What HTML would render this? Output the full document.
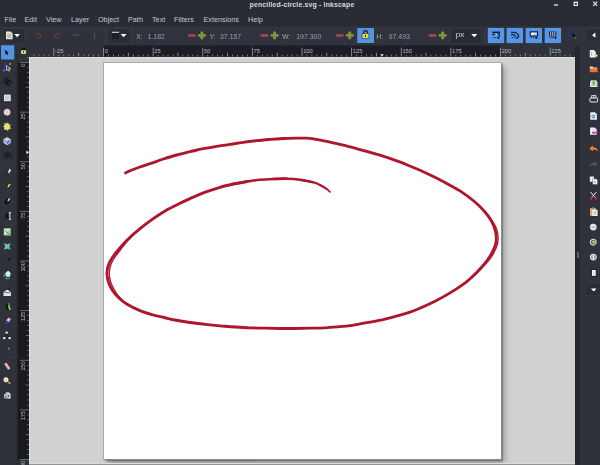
<!DOCTYPE html>
<html>
<head>
<meta charset="utf-8">
<title>pencilled-circle.svg - Inkscape</title>
<style>
html,body{margin:0;padding:0;}
body{width:600px;height:465px;overflow:hidden;background:#292c35;font-family:"Liberation Sans",sans-serif;position:relative;}
.abs{position:absolute;}
#title{left:0;top:0;width:600px;height:12px;background:#292c35;}
#title .t{position:absolute;left:0;width:604px;top:-0.3px;text-align:center;font-weight:bold;font-size:6.9px;line-height:10px;color:#d5d8de;letter-spacing:0.17px;}
#menu{left:0;top:12px;width:600px;height:12.5px;background:#292c35;}
#menu span{position:absolute;top:2.5px;font-size:7.2px;line-height:10px;color:#c3c7cf;white-space:nowrap;letter-spacing:0.03px;}
#tb{left:0;top:24.5px;width:600px;height:21px;background:#2f323b;border-top:0.5px solid #262830;}
#tbt{left:0;top:25px;width:600px;height:21px;}
#tbt .lbl{position:absolute;top:6.5px;font-size:6.9px;line-height:10px;color:#a4a8b1;}
#tbt .val{position:absolute;top:6.5px;font-size:6.95px;line-height:10px;color:#9a9ea8;}
#left{left:0;top:45.5px;width:17px;height:420px;background:#2f323b;}
#right{left:575px;top:45.5px;width:25px;height:420px;background:#2f323b;}
#canvas{left:29px;top:56.5px;width:546px;height:409px;background:#d1d1d1;overflow:hidden;box-shadow:inset 1.3px 1.3px 0 0 #dddddd;}
#page{position:absolute;left:74.6px;top:6.1px;width:397.2px;height:396.9px;background:#fff;box-shadow:0 0 0 0.7px #9c9c9c, 0.9px 0.9px 0 0.4px #5e5e5e, 2.2px 2.2px 2.2px 0.3px rgba(40,40,40,0.5), 3.5px 3.5px 6px 0 rgba(0,0,0,0.22);}
#bot{left:29px;top:462.6px;width:546px;height:2.4px;background:linear-gradient(#dadada 0,#dadada 30%,#8e8e8e 45%,#9a9a9a 100%);}
.rt{font-family:"Liberation Sans",sans-serif;font-size:5.7px;fill:#b9bdc5;}
svg{position:absolute;left:0;top:0;overflow:visible;}
#icons{filter:blur(0.35px);}
#rulers{filter:blur(0.25px);}
</style>
</head>
<body>
<div id="title" class="abs"><div class="t">pencilled-circle.svg - Inkscape</div></div>
<div id="menu" class="abs">
<span style="left:4.5px">File</span><span style="left:24.5px">Edit</span><span style="left:46px">View</span><span style="left:71px">Layer</span><span style="left:98px">Object</span><span style="left:128px">Path</span><span style="left:152px">Text</span><span style="left:174px">Filters</span><span style="left:203.5px">Extensions</span><span style="left:248px">Help</span>
</div>
<div id="tb" class="abs"></div>
<div id="left" class="abs"></div>
<div id="right" class="abs"></div>
<div id="canvas" class="abs"><div id="page"></div></div>
<div id="bot" class="abs"></div>

<!-- rulers -->
<svg width="600" height="465" viewBox="0 0 600 465" id="rulers">
<rect x="17" y="45.5" width="558" height="11" fill="#2f323b"/>
<rect x="17" y="56.5" width="12" height="409" fill="#2f323b"/>
<rect x="103.5" y="45.5" width="396.8" height="11" fill="#1c1e24"/>
<rect x="17.4" y="62" width="11.6" height="397.5" fill="#191b20"/>
<rect x="16.8" y="45.5" width="0.7" height="420" fill="#25272e"/>
<rect x="33.62" y="54.6" width="0.8" height="1.9" fill="#8c8f97"/>
<rect x="38.59" y="54.6" width="0.8" height="1.9" fill="#8c8f97"/>
<rect x="43.55" y="54.6" width="0.8" height="1.9" fill="#8c8f97"/>
<rect x="48.51" y="54.6" width="0.8" height="1.9" fill="#8c8f97"/>
<rect x="53.48" y="47.6" width="0.8" height="8.9" fill="#9da0a8"/>
<text x="55.08" y="53.4" class="rt">-25</text>
<rect x="58.44" y="54.6" width="0.8" height="1.9" fill="#8c8f97"/>
<rect x="63.40" y="54.6" width="0.8" height="1.9" fill="#8c8f97"/>
<rect x="68.36" y="54.6" width="0.8" height="1.9" fill="#8c8f97"/>
<rect x="73.32" y="54.6" width="0.8" height="1.9" fill="#8c8f97"/>
<rect x="78.29" y="52.8" width="0.8" height="3.7" fill="#9b9ea6"/>
<rect x="83.25" y="54.6" width="0.8" height="1.9" fill="#8c8f97"/>
<rect x="88.21" y="54.6" width="0.8" height="1.9" fill="#8c8f97"/>
<rect x="93.17" y="54.6" width="0.8" height="1.9" fill="#8c8f97"/>
<rect x="98.14" y="54.6" width="0.8" height="1.9" fill="#8c8f97"/>
<rect x="103.10" y="47.6" width="0.8" height="8.9" fill="#9da0a8"/>
<text x="104.70" y="53.4" class="rt">0</text>
<rect x="108.06" y="54.6" width="0.8" height="1.9" fill="#8c8f97"/>
<rect x="113.02" y="54.6" width="0.8" height="1.9" fill="#8c8f97"/>
<rect x="117.99" y="54.6" width="0.8" height="1.9" fill="#8c8f97"/>
<rect x="122.95" y="54.6" width="0.8" height="1.9" fill="#8c8f97"/>
<rect x="127.91" y="52.8" width="0.8" height="3.7" fill="#9b9ea6"/>
<rect x="132.88" y="54.6" width="0.8" height="1.9" fill="#8c8f97"/>
<rect x="137.84" y="54.6" width="0.8" height="1.9" fill="#8c8f97"/>
<rect x="142.80" y="54.6" width="0.8" height="1.9" fill="#8c8f97"/>
<rect x="147.76" y="54.6" width="0.8" height="1.9" fill="#8c8f97"/>
<rect x="152.72" y="47.6" width="0.8" height="8.9" fill="#9da0a8"/>
<text x="154.32" y="53.4" class="rt">25</text>
<rect x="157.69" y="54.6" width="0.8" height="1.9" fill="#8c8f97"/>
<rect x="162.65" y="54.6" width="0.8" height="1.9" fill="#8c8f97"/>
<rect x="167.61" y="54.6" width="0.8" height="1.9" fill="#8c8f97"/>
<rect x="172.58" y="54.6" width="0.8" height="1.9" fill="#8c8f97"/>
<rect x="177.54" y="52.8" width="0.8" height="3.7" fill="#9b9ea6"/>
<rect x="182.50" y="54.6" width="0.8" height="1.9" fill="#8c8f97"/>
<rect x="187.46" y="54.6" width="0.8" height="1.9" fill="#8c8f97"/>
<rect x="192.42" y="54.6" width="0.8" height="1.9" fill="#8c8f97"/>
<rect x="197.39" y="54.6" width="0.8" height="1.9" fill="#8c8f97"/>
<rect x="202.35" y="47.6" width="0.8" height="8.9" fill="#9da0a8"/>
<text x="203.95" y="53.4" class="rt">50</text>
<rect x="207.31" y="54.6" width="0.8" height="1.9" fill="#8c8f97"/>
<rect x="212.28" y="54.6" width="0.8" height="1.9" fill="#8c8f97"/>
<rect x="217.24" y="54.6" width="0.8" height="1.9" fill="#8c8f97"/>
<rect x="222.20" y="54.6" width="0.8" height="1.9" fill="#8c8f97"/>
<rect x="227.16" y="52.8" width="0.8" height="3.7" fill="#9b9ea6"/>
<rect x="232.12" y="54.6" width="0.8" height="1.9" fill="#8c8f97"/>
<rect x="237.09" y="54.6" width="0.8" height="1.9" fill="#8c8f97"/>
<rect x="242.05" y="54.6" width="0.8" height="1.9" fill="#8c8f97"/>
<rect x="247.01" y="54.6" width="0.8" height="1.9" fill="#8c8f97"/>
<rect x="251.97" y="47.6" width="0.8" height="8.9" fill="#9da0a8"/>
<text x="253.57" y="53.4" class="rt">75</text>
<rect x="256.94" y="54.6" width="0.8" height="1.9" fill="#8c8f97"/>
<rect x="261.90" y="54.6" width="0.8" height="1.9" fill="#8c8f97"/>
<rect x="266.86" y="54.6" width="0.8" height="1.9" fill="#8c8f97"/>
<rect x="271.83" y="54.6" width="0.8" height="1.9" fill="#8c8f97"/>
<rect x="276.79" y="52.8" width="0.8" height="3.7" fill="#9b9ea6"/>
<rect x="281.75" y="54.6" width="0.8" height="1.9" fill="#8c8f97"/>
<rect x="286.71" y="54.6" width="0.8" height="1.9" fill="#8c8f97"/>
<rect x="291.68" y="54.6" width="0.8" height="1.9" fill="#8c8f97"/>
<rect x="296.64" y="54.6" width="0.8" height="1.9" fill="#8c8f97"/>
<rect x="301.60" y="47.6" width="0.8" height="8.9" fill="#9da0a8"/>
<text x="303.20" y="53.4" class="rt">100</text>
<rect x="306.56" y="54.6" width="0.8" height="1.9" fill="#8c8f97"/>
<rect x="311.53" y="54.6" width="0.8" height="1.9" fill="#8c8f97"/>
<rect x="316.49" y="54.6" width="0.8" height="1.9" fill="#8c8f97"/>
<rect x="321.45" y="54.6" width="0.8" height="1.9" fill="#8c8f97"/>
<rect x="326.41" y="52.8" width="0.8" height="3.7" fill="#9b9ea6"/>
<rect x="331.38" y="54.6" width="0.8" height="1.9" fill="#8c8f97"/>
<rect x="336.34" y="54.6" width="0.8" height="1.9" fill="#8c8f97"/>
<rect x="341.30" y="54.6" width="0.8" height="1.9" fill="#8c8f97"/>
<rect x="346.26" y="54.6" width="0.8" height="1.9" fill="#8c8f97"/>
<rect x="351.23" y="47.6" width="0.8" height="8.9" fill="#9da0a8"/>
<text x="352.82" y="53.4" class="rt">125</text>
<rect x="356.19" y="54.6" width="0.8" height="1.9" fill="#8c8f97"/>
<rect x="361.15" y="54.6" width="0.8" height="1.9" fill="#8c8f97"/>
<rect x="366.11" y="54.6" width="0.8" height="1.9" fill="#8c8f97"/>
<rect x="371.08" y="54.6" width="0.8" height="1.9" fill="#8c8f97"/>
<rect x="376.04" y="52.8" width="0.8" height="3.7" fill="#9b9ea6"/>
<rect x="381.00" y="54.6" width="0.8" height="1.9" fill="#8c8f97"/>
<rect x="385.96" y="54.6" width="0.8" height="1.9" fill="#8c8f97"/>
<rect x="390.93" y="54.6" width="0.8" height="1.9" fill="#8c8f97"/>
<rect x="395.89" y="54.6" width="0.8" height="1.9" fill="#8c8f97"/>
<rect x="400.85" y="47.6" width="0.8" height="8.9" fill="#9da0a8"/>
<text x="402.45" y="53.4" class="rt">150</text>
<rect x="405.81" y="54.6" width="0.8" height="1.9" fill="#8c8f97"/>
<rect x="410.78" y="54.6" width="0.8" height="1.9" fill="#8c8f97"/>
<rect x="415.74" y="54.6" width="0.8" height="1.9" fill="#8c8f97"/>
<rect x="420.70" y="54.6" width="0.8" height="1.9" fill="#8c8f97"/>
<rect x="425.66" y="52.8" width="0.8" height="3.7" fill="#9b9ea6"/>
<rect x="430.63" y="54.6" width="0.8" height="1.9" fill="#8c8f97"/>
<rect x="435.59" y="54.6" width="0.8" height="1.9" fill="#8c8f97"/>
<rect x="440.55" y="54.6" width="0.8" height="1.9" fill="#8c8f97"/>
<rect x="445.51" y="54.6" width="0.8" height="1.9" fill="#8c8f97"/>
<rect x="450.48" y="47.6" width="0.8" height="8.9" fill="#9da0a8"/>
<text x="452.07" y="53.4" class="rt">175</text>
<rect x="455.44" y="54.6" width="0.8" height="1.9" fill="#8c8f97"/>
<rect x="460.40" y="54.6" width="0.8" height="1.9" fill="#8c8f97"/>
<rect x="465.36" y="54.6" width="0.8" height="1.9" fill="#8c8f97"/>
<rect x="470.33" y="54.6" width="0.8" height="1.9" fill="#8c8f97"/>
<rect x="475.29" y="52.8" width="0.8" height="3.7" fill="#9b9ea6"/>
<rect x="480.25" y="54.6" width="0.8" height="1.9" fill="#8c8f97"/>
<rect x="485.21" y="54.6" width="0.8" height="1.9" fill="#8c8f97"/>
<rect x="490.18" y="54.6" width="0.8" height="1.9" fill="#8c8f97"/>
<rect x="495.14" y="54.6" width="0.8" height="1.9" fill="#8c8f97"/>
<rect x="500.10" y="47.6" width="0.8" height="8.9" fill="#9da0a8"/>
<text x="501.70" y="53.4" class="rt">200</text>
<rect x="505.06" y="54.6" width="0.8" height="1.9" fill="#8c8f97"/>
<rect x="510.03" y="54.6" width="0.8" height="1.9" fill="#8c8f97"/>
<rect x="514.99" y="54.6" width="0.8" height="1.9" fill="#8c8f97"/>
<rect x="519.95" y="54.6" width="0.8" height="1.9" fill="#8c8f97"/>
<rect x="524.91" y="52.8" width="0.8" height="3.7" fill="#9b9ea6"/>
<rect x="529.88" y="54.6" width="0.8" height="1.9" fill="#8c8f97"/>
<rect x="534.84" y="54.6" width="0.8" height="1.9" fill="#8c8f97"/>
<rect x="539.80" y="54.6" width="0.8" height="1.9" fill="#8c8f97"/>
<rect x="544.76" y="54.6" width="0.8" height="1.9" fill="#8c8f97"/>
<rect x="549.73" y="47.6" width="0.8" height="8.9" fill="#9da0a8"/>
<text x="551.33" y="53.4" class="rt">225</text>
<rect x="554.69" y="54.6" width="0.8" height="1.9" fill="#8c8f97"/>
<rect x="559.65" y="54.6" width="0.8" height="1.9" fill="#8c8f97"/>
<rect x="564.61" y="54.6" width="0.8" height="1.9" fill="#8c8f97"/>
<rect x="569.58" y="54.6" width="0.8" height="1.9" fill="#8c8f97"/>
<rect x="27" y="57.14" width="2" height="0.8" fill="#676a73"/>
<rect x="19.8" y="62.10" width="9.2" height="0.8" fill="#777a83"/>
<text transform="translate(24.6 63.60) rotate(-90)" class="rt" text-anchor="end">0</text>
<rect x="27" y="67.06" width="2" height="0.8" fill="#676a73"/>
<rect x="27" y="72.02" width="2" height="0.8" fill="#676a73"/>
<rect x="27" y="76.99" width="2" height="0.8" fill="#676a73"/>
<rect x="27" y="81.95" width="2" height="0.8" fill="#676a73"/>
<rect x="25.6" y="86.91" width="3.4" height="0.8" fill="#777a83"/>
<rect x="27" y="91.88" width="2" height="0.8" fill="#676a73"/>
<rect x="27" y="96.84" width="2" height="0.8" fill="#676a73"/>
<rect x="27" y="101.80" width="2" height="0.8" fill="#676a73"/>
<rect x="27" y="106.76" width="2" height="0.8" fill="#676a73"/>
<rect x="19.8" y="111.72" width="9.2" height="0.8" fill="#777a83"/>
<text transform="translate(24.6 113.22) rotate(-90)" class="rt" text-anchor="end">25</text>
<rect x="27" y="116.69" width="2" height="0.8" fill="#676a73"/>
<rect x="27" y="121.65" width="2" height="0.8" fill="#676a73"/>
<rect x="27" y="126.61" width="2" height="0.8" fill="#676a73"/>
<rect x="27" y="131.58" width="2" height="0.8" fill="#676a73"/>
<rect x="25.6" y="136.54" width="3.4" height="0.8" fill="#777a83"/>
<rect x="27" y="141.50" width="2" height="0.8" fill="#676a73"/>
<rect x="27" y="146.46" width="2" height="0.8" fill="#676a73"/>
<rect x="27" y="151.42" width="2" height="0.8" fill="#676a73"/>
<rect x="27" y="156.39" width="2" height="0.8" fill="#676a73"/>
<rect x="19.8" y="161.35" width="9.2" height="0.8" fill="#777a83"/>
<text transform="translate(24.6 162.85) rotate(-90)" class="rt" text-anchor="end">50</text>
<rect x="27" y="166.31" width="2" height="0.8" fill="#676a73"/>
<rect x="27" y="171.28" width="2" height="0.8" fill="#676a73"/>
<rect x="27" y="176.24" width="2" height="0.8" fill="#676a73"/>
<rect x="27" y="181.20" width="2" height="0.8" fill="#676a73"/>
<rect x="25.6" y="186.16" width="3.4" height="0.8" fill="#777a83"/>
<rect x="27" y="191.12" width="2" height="0.8" fill="#676a73"/>
<rect x="27" y="196.09" width="2" height="0.8" fill="#676a73"/>
<rect x="27" y="201.05" width="2" height="0.8" fill="#676a73"/>
<rect x="27" y="206.01" width="2" height="0.8" fill="#676a73"/>
<rect x="19.8" y="210.97" width="9.2" height="0.8" fill="#777a83"/>
<text transform="translate(24.6 212.47) rotate(-90)" class="rt" text-anchor="end">75</text>
<rect x="27" y="215.94" width="2" height="0.8" fill="#676a73"/>
<rect x="27" y="220.90" width="2" height="0.8" fill="#676a73"/>
<rect x="27" y="225.86" width="2" height="0.8" fill="#676a73"/>
<rect x="27" y="230.82" width="2" height="0.8" fill="#676a73"/>
<rect x="25.6" y="235.79" width="3.4" height="0.8" fill="#777a83"/>
<rect x="27" y="240.75" width="2" height="0.8" fill="#676a73"/>
<rect x="27" y="245.71" width="2" height="0.8" fill="#676a73"/>
<rect x="27" y="250.68" width="2" height="0.8" fill="#676a73"/>
<rect x="27" y="255.64" width="2" height="0.8" fill="#676a73"/>
<rect x="19.8" y="260.60" width="9.2" height="0.8" fill="#777a83"/>
<text transform="translate(24.6 262.10) rotate(-90)" class="rt" text-anchor="end">100</text>
<rect x="27" y="265.56" width="2" height="0.8" fill="#676a73"/>
<rect x="27" y="270.53" width="2" height="0.8" fill="#676a73"/>
<rect x="27" y="275.49" width="2" height="0.8" fill="#676a73"/>
<rect x="27" y="280.45" width="2" height="0.8" fill="#676a73"/>
<rect x="25.6" y="285.41" width="3.4" height="0.8" fill="#777a83"/>
<rect x="27" y="290.38" width="2" height="0.8" fill="#676a73"/>
<rect x="27" y="295.34" width="2" height="0.8" fill="#676a73"/>
<rect x="27" y="300.30" width="2" height="0.8" fill="#676a73"/>
<rect x="27" y="305.26" width="2" height="0.8" fill="#676a73"/>
<rect x="19.8" y="310.23" width="9.2" height="0.8" fill="#777a83"/>
<text transform="translate(24.6 311.73) rotate(-90)" class="rt" text-anchor="end">125</text>
<rect x="27" y="315.19" width="2" height="0.8" fill="#676a73"/>
<rect x="27" y="320.15" width="2" height="0.8" fill="#676a73"/>
<rect x="27" y="325.11" width="2" height="0.8" fill="#676a73"/>
<rect x="27" y="330.08" width="2" height="0.8" fill="#676a73"/>
<rect x="25.6" y="335.04" width="3.4" height="0.8" fill="#777a83"/>
<rect x="27" y="340.00" width="2" height="0.8" fill="#676a73"/>
<rect x="27" y="344.96" width="2" height="0.8" fill="#676a73"/>
<rect x="27" y="349.93" width="2" height="0.8" fill="#676a73"/>
<rect x="27" y="354.89" width="2" height="0.8" fill="#676a73"/>
<rect x="19.8" y="359.85" width="9.2" height="0.8" fill="#777a83"/>
<text transform="translate(24.6 361.35) rotate(-90)" class="rt" text-anchor="end">150</text>
<rect x="27" y="364.81" width="2" height="0.8" fill="#676a73"/>
<rect x="27" y="369.78" width="2" height="0.8" fill="#676a73"/>
<rect x="27" y="374.74" width="2" height="0.8" fill="#676a73"/>
<rect x="27" y="379.70" width="2" height="0.8" fill="#676a73"/>
<rect x="25.6" y="384.66" width="3.4" height="0.8" fill="#777a83"/>
<rect x="27" y="389.63" width="2" height="0.8" fill="#676a73"/>
<rect x="27" y="394.59" width="2" height="0.8" fill="#676a73"/>
<rect x="27" y="399.55" width="2" height="0.8" fill="#676a73"/>
<rect x="27" y="404.51" width="2" height="0.8" fill="#676a73"/>
<rect x="19.8" y="409.48" width="9.2" height="0.8" fill="#777a83"/>
<text transform="translate(24.6 410.98) rotate(-90)" class="rt" text-anchor="end">175</text>
<rect x="27" y="414.44" width="2" height="0.8" fill="#676a73"/>
<rect x="27" y="419.40" width="2" height="0.8" fill="#676a73"/>
<rect x="27" y="424.36" width="2" height="0.8" fill="#676a73"/>
<rect x="27" y="429.33" width="2" height="0.8" fill="#676a73"/>
<rect x="25.6" y="434.29" width="3.4" height="0.8" fill="#777a83"/>
<rect x="27" y="439.25" width="2" height="0.8" fill="#676a73"/>
<rect x="27" y="444.21" width="2" height="0.8" fill="#676a73"/>
<rect x="27" y="449.18" width="2" height="0.8" fill="#676a73"/>
<rect x="27" y="454.14" width="2" height="0.8" fill="#676a73"/>
<rect x="19.8" y="459.10" width="9.2" height="0.8" fill="#777a83"/>
<text transform="translate(24.6 460.60) rotate(-90)" class="rt" text-anchor="end">200</text>
<path d="M22.3 50.3v-1a1.3 1.3 0 0 1 2.6 0v1" stroke="#0c0d10" stroke-width="1.1" fill="none"/>
<rect x="20.8" y="50" width="5.5" height="4.3" rx="0.5" fill="#ecec84" stroke="#0c0d10" stroke-width="0.6"/>
<rect x="23.2" y="51.2" width="0.8" height="1.8" fill="#0c0d10"/>
<path d="M380.2 54.2h3.6l-1.8 2.4z" fill="#e8eaee"/>
<path d="M26.4 150.6v3.6l2.6-1.8z" fill="#e8eaee"/>
</svg>

<!-- drawing -->
<svg width="600" height="465" viewBox="0 0 600 465" id="drawing">
<g fill="none" stroke="#ae162c" stroke-linecap="round" stroke-linejoin="round">
<path d="M125.5 173.0C127.0 172.3 128.5 171.4 130.0 170.8C133.3 169.4 136.6 168.2 140.0 167.0C143.3 165.8 146.7 164.8 150.0 163.7C154.4 162.2 158.8 160.5 163.3 159.0C167.7 157.6 172.2 156.2 176.7 155.0C181.1 153.8 185.6 152.8 190.0 151.7C194.4 150.7 198.8 149.6 203.3 148.7C207.7 147.8 212.2 147.0 216.7 146.3C221.1 145.6 225.6 145.1 230.0 144.4C234.4 143.7 238.9 142.9 243.3 142.3C247.8 141.7 252.2 141.2 256.7 140.7C261.1 140.2 265.6 139.8 270.0 139.4C274.4 139.0 278.9 138.7 283.3 138.5C287.8 138.3 292.2 138.2 296.7 138.1C300.0 138.1 303.4 138.1 306.7 138.2C308.9 138.3 311.1 138.5 313.3 138.8C317.8 139.5 322.3 140.4 326.7 141.3C331.2 142.2 335.6 143.2 340.0 144.3C344.4 145.4 348.9 146.5 353.3 147.7C357.8 148.9 362.2 150.0 366.7 151.3C371.1 152.5 375.6 153.8 380.0 155.2C384.5 156.6 388.9 158.1 393.3 159.7C397.8 161.3 402.3 162.9 406.7 164.7C411.2 166.5 415.6 168.3 420.0 170.3C424.5 172.3 428.9 174.4 433.3 176.6C437.8 178.8 442.3 181.0 446.7 183.4C451.2 185.8 455.7 188.1 460.0 190.9C465.0 194.2 469.9 197.7 474.4 201.5C478.1 204.6 481.6 208.1 484.8 211.8C487.3 214.7 489.7 217.9 491.6 221.3C493.1 224.0 494.2 226.9 495.1 229.9C495.8 232.3 496.2 235.0 496.3 237.5C496.4 239.8 496.1 242.3 495.5 244.5C494.8 247.1 493.6 249.6 492.4 252.0C491.1 254.6 489.5 257.1 487.8 259.5C485.5 262.7 482.9 265.8 480.2 268.8C477.8 271.5 475.3 274.0 472.7 276.4C470.3 278.6 467.9 280.9 465.2 282.8C460.3 286.4 455.3 289.7 450.1 292.9C445.2 295.9 440.2 298.7 435.1 301.2C428.5 304.4 421.8 307.5 415.0 310.2C410.1 312.2 405.0 313.7 400.0 315.2C395.0 316.7 390.0 318.0 385.0 319.2C380.0 320.4 375.0 321.3 370.0 322.2C365.0 323.1 360.0 324.0 355.0 324.8C350.0 325.5 345.0 326.2 340.0 326.7C335.0 327.2 330.0 327.5 325.0 327.8C320.0 328.0 315.0 328.1 310.0 328.2C305.0 328.3 300.0 328.4 295.0 328.5C290.0 328.5 285.0 328.5 280.0 328.5C275.0 328.4 270.0 328.3 265.0 328.2C260.0 328.1 255.0 328.0 250.0 327.8C245.0 327.6 240.0 327.3 235.0 327.0C230.0 326.7 225.0 326.2 220.0 325.8C215.0 325.3 210.0 324.8 205.0 324.3C200.0 323.7 195.0 323.2 190.0 322.5C185.0 321.8 180.0 321.0 175.0 320.0C171.3 319.3 167.7 318.3 164.0 317.5C160.4 316.7 156.8 316.0 153.3 315.0C148.8 313.7 144.3 312.4 140.0 310.6C135.4 308.7 130.9 306.6 126.7 304.0C123.8 302.3 121.1 300.1 118.7 297.7C116.2 295.3 113.9 292.6 112.0 289.7C110.4 287.3 109.1 284.5 108.3 281.7C107.4 278.7 106.9 275.4 107.0 272.3C107.1 269.5 107.8 266.6 108.8 264.0C109.6 261.7 111.0 259.6 112.4 257.5C113.9 255.2 115.6 253.1 117.3 251.0C120.3 247.4 123.4 243.8 126.7 240.5C130.9 236.4 135.4 232.5 140.0 228.7C144.3 225.2 148.8 221.9 153.3 218.7C157.7 215.6 162.1 212.7 166.7 210.0C171.0 207.5 175.5 205.5 180.0 203.3C184.4 201.2 188.8 199.0 193.3 197.1C197.7 195.2 202.2 193.4 206.7 191.7C211.1 190.1 215.5 188.6 220.0 187.3C224.4 186.0 228.8 185.0 233.3 184.0C237.7 183.1 242.2 182.3 246.7 181.6" stroke-width="2.85"/>
<path d="M233.3 184.0C237.7 183.1 242.2 182.3 246.7 181.6C251.1 180.9 255.6 180.2 260.0 179.8C264.4 179.4 268.9 179.2 273.3 179.0C277.8 178.8 282.2 178.6 286.7 178.7" stroke-width="2.65"/>
<path d="M273.3 179.0C277.8 178.8 282.2 178.6 286.7 178.7C291.1 178.8 295.6 179.1 300.0 179.7C304.5 180.3 309.0 181.1 313.3 182.3" stroke-width="2.4"/>
<path d="M300.0 179.7C304.5 180.3 309.0 181.1 313.3 182.3C315.6 182.9 317.9 183.9 320.0 185.0C322.3 186.2 324.6 187.5 326.7 189.0" stroke-width="2.0"/>
<path d="M320.0 185.0C322.3 186.2 324.6 187.5 326.7 189.0C327.9 189.8 328.9 190.9 330.0 191.9" stroke-width="1.7"/>
<path d="M126.7 304.0C124.1 302.3 121.9 300.0 119.9 297.7C117.8 295.3 115.9 292.5 114.3 289.7C112.8 287.2 111.4 284.5 110.6 281.7C109.7 278.7 109.2 275.4 109.3 272.3C109.4 269.5 110.1 266.6 111.1 264.0C111.9 261.7 113.3 259.6 114.7 257.5C116.2 255.2 117.9 253.1 119.6 251.0C122.3 247.5 124.9 243.8 127.9 240.5C131.7 236.4 135.7 232.4 140.0 228.7" stroke-width="1.3"/>
<path d="M484.8 211.8C487.6 214.8 490.3 217.9 492.6 221.3C494.4 224.0 496.0 226.9 497.0 229.9C497.8 232.3 498.1 235.0 498.2 237.5C498.3 239.8 498.0 242.3 497.4 244.5C496.7 247.1 495.5 249.6 494.3 252.0C493.0 254.6 491.5 257.2 489.7 259.5C487.1 262.8 484.2 265.8 481.2 268.8C478.5 271.5 475.6 273.9 472.7 276.4" stroke-width="1.2"/>
</g>
</svg>

<!-- icons -->
<svg width="600" height="465" viewBox="0 0 600 465" id="icons">

<!-- window controls -->
<rect x="554" y="4.4" width="4.2" height="1.3" fill="#e4e6ea"/>
<rect x="573.6" y="1.6" width="4.4" height="4.4" fill="#e4e6ea"/><rect x="574.9" y="3.1" width="1.9" height="1.8" fill="#292c35"/>
<path d="M593.2 1.7L597.2 5.9M597.2 1.7L593.2 5.9" stroke="#e4e6ea" stroke-width="1.2" fill="none"/>

<!-- toolbar: new-doc dropdown -->
<rect x="3.2" y="28.3" width="21.3" height="15.3" fill="#2a2d35" stroke="#3b3e48" stroke-width="0.6"/>
<path d="M6 31.6h4.6l2 2v5.6H6z" fill="#ebe7dc"/><rect x="7.2" y="33.4" width="4" height="4.6" fill="#bdbab0"/>
<path d="M14.3 34L19.9 34L17.1 37.2z" fill="#ffffff"/>
<rect x="26.8" y="28" width="0.6" height="16" fill="#3a3d46"/>
<!-- undo / redo dim -->
<path d="M36.6 34.2a2.3 2.3 0 1 1 0.4 3.3" stroke="#5d3e35" stroke-width="1.3" fill="none"/><path d="M35.3 32.3l2.6 0.4l-1.3 2.3z" fill="#5d3e35"/>
<path d="M59 34.2a2.3 2.3 0 1 0 -0.4 3.3" stroke="#5d3e35" stroke-width="1.3" fill="none"/><path d="M60.3 32.3l-2.6 0.4l1.3 2.3z" fill="#5d3e35"/>
<rect x="72.5" y="34.1" width="6.6" height="1.3" fill="#684434"/>
<rect x="94" y="32.4" width="1.1" height="6.6" fill="#684434"/>
<rect x="105.4" y="28" width="0.6" height="16" fill="#3a3d46"/>
<!-- stroke style dropdown -->
<rect x="108" y="28.3" width="22" height="15.3" fill="#2a2d35" stroke="#3b3e48" stroke-width="0.6"/>
<rect x="112" y="32" width="7" height="7" fill="#1d1f25"/><rect x="112" y="31.8" width="7" height="1" fill="#e6e6e6"/>
<path d="M120.7 34L126.5 34L123.6 37.2z" fill="#ffffff"/>
<rect x="132.3" y="28" width="0.6" height="16" fill="#3a3d46"/>

<!-- spin boxes -->
<rect x="144.5" y="28.6" width="63.0" height="14.6" fill="#30333d" stroke="#373a45" stroke-width="0.5"/>
<rect x="217.0" y="28.6" width="63.0" height="14.6" fill="#30333d" stroke="#373a45" stroke-width="0.5"/>
<rect x="292.5" y="28.6" width="63.0" height="14.6" fill="#30333d" stroke="#373a45" stroke-width="0.5"/>
<rect x="385.5" y="28.6" width="63.0" height="14.6" fill="#30333d" stroke="#373a45" stroke-width="0.5"/>
<!-- spin +/- -->

<g transform="translate(188 35.4)"><rect x="0" y="-1.25" width="7.6" height="2.5" rx="0.6" fill="#a64b4a"/>
<rect x="10" y="-1.45" width="7.8" height="2.9" rx="0.5" fill="#82933e"/><rect x="12.45" y="-3.8" width="2.9" height="7.6" rx="0.5" fill="#82933e"/></g>
<g transform="translate(260.7 35.4)"><rect x="0" y="-1.25" width="7.6" height="2.5" rx="0.6" fill="#a64b4a"/>
<rect x="10" y="-1.45" width="7.8" height="2.9" rx="0.5" fill="#82933e"/><rect x="12.45" y="-3.8" width="2.9" height="7.6" rx="0.5" fill="#82933e"/></g>
<g transform="translate(335.9 35.4)"><rect x="0" y="-1.25" width="7.6" height="2.5" rx="0.6" fill="#a64b4a"/>
<rect x="10" y="-1.45" width="7.8" height="2.9" rx="0.5" fill="#82933e"/><rect x="12.45" y="-3.8" width="2.9" height="7.6" rx="0.5" fill="#82933e"/></g>
<g transform="translate(428.8 35.4)"><rect x="0" y="-1.25" width="7.6" height="2.5" rx="0.6" fill="#a64b4a"/>
<rect x="10" y="-1.45" width="7.8" height="2.9" rx="0.5" fill="#82933e"/><rect x="12.45" y="-3.8" width="2.9" height="7.6" rx="0.5" fill="#82933e"/></g>

<!-- lock button -->
<rect x="357.2" y="28" width="16.8" height="15" fill="#5294e2"/>
<path d="M363.6 33.8v-1.2a1.9 1.9 0 0 1 3.8 0v1.2" stroke="#15171c" stroke-width="1.2" fill="none"/>
<rect x="362.1" y="33.6" width="6.8" height="4.8" fill="#f3d54e" stroke="#15171c" stroke-width="0.5"/>
<rect x="365" y="35" width="1" height="2" fill="#15171c"/>

<!-- px dropdown -->
<rect x="450.7" y="28.2" width="30.3" height="15" fill="#282b33" stroke="#3b3e48" stroke-width="0.5"/>
<path d="M471.2 34L477.4 34L474.3 37.3z" fill="#ffffff"/>
<rect x="484.3" y="28" width="0.6" height="16" fill="#3a3d46"/>

<!-- blue toggle buttons -->
<rect x="487.8" y="27.9" width="16.4" height="15.2" fill="#5597e6"/>
<rect x="506.6" y="27.9" width="16.4" height="15.2" fill="#5597e6"/>
<rect x="525.6" y="27.9" width="16.4" height="15.2" fill="#5597e6"/>
<rect x="544.7" y="27.9" width="16.4" height="15.2" fill="#5597e6"/>
<!-- b1 -->
<g fill="#0d1b3e">
<rect x="492.2" y="31.6" width="7.6" height="1.5"/><rect x="492.2" y="33.8" width="5.4" height="1.3"/><rect x="498.6" y="31.6" width="1.2" height="5.4"/>
<rect x="492.6" y="37.3" width="1.4" height="0.8"/><rect x="494.8" y="37.3" width="1.4" height="0.8"/><circle cx="498.3" cy="37.8" r="1.15"/>
</g>
<rect x="495.3" y="33.9" width="1.8" height="1.1" fill="#dfe8f6"/>
<!-- b2 -->
<g fill="none" stroke="#0d1b3e" stroke-width="1.3">
<path d="M511 32.4h2.8a5 5 0 0 1 5 4.6"/><path d="M511 34.6h2a3 3 0 0 1 2.6 2"/>
</g>
<g fill="#0d1b3e"><rect x="511.6" y="37.3" width="1.4" height="0.8"/><rect x="513.8" y="37.3" width="1.4" height="0.8"/><circle cx="517.3" cy="37.8" r="1.15"/></g>
<!-- b3 -->
<rect x="530.2" y="31.8" width="7.3" height="4.2" fill="#c9d3e2" stroke="#0d1b3e" stroke-width="1.1"/>
<rect x="531.2" y="33" width="3" height="1.6" fill="#f4f6fa"/>
<g fill="#0d1b3e"><rect x="530.6" y="37.3" width="1.4" height="0.8"/><rect x="532.8" y="37.3" width="1.4" height="0.8"/><circle cx="536.3" cy="37.8" r="1.15"/></g>
<!-- b4 -->
<rect x="549" y="31.6" width="7.4" height="4.8" fill="#0d1b3e"/>
<g fill="#eef2fa"><circle cx="550.6" cy="33" r="0.75"/><circle cx="552.7" cy="33" r="0.75"/><circle cx="554.8" cy="33" r="0.75"/><circle cx="550.6" cy="35.1" r="0.75"/><circle cx="552.7" cy="35.1" r="0.75"/><circle cx="554.8" cy="35.1" r="0.75"/></g>
<g fill="#0d1b3e"><rect x="549.6" y="37.3" width="1.4" height="0.8"/><rect x="551.8" y="37.3" width="1.4" height="0.8"/><circle cx="555.3" cy="37.8" r="1.15"/></g>
<!-- node-ish icon -->
<rect x="568.6" y="31.6" width="2.6" height="2.6" fill="#2233c8"/><path d="M570 33l4 2.6" stroke="#15171c" stroke-width="0.9"/><circle cx="574" cy="35.6" r="1.4" fill="#0c0d10"/><circle cx="575.6" cy="37.8" r="1.1" fill="#2e7a4a"/>
<!-- overflow -->
<rect x="586" y="28.8" width="15" height="12.2" fill="#292c34" stroke="#3b3e48" stroke-width="0.6"/>
<path d="M595.4 32.6L595.4 37.8L592.1 35.2z" fill="#ffffff"/>

<!-- LEFT TOOLBOX -->
<rect x="1" y="45.2" width="13.2" height="14.3" fill="#5294e2"/>
<path d="M5.3 49.8v4.6l1.1-1l0.8 1.8l0.9-0.4l-0.8-1.8h1.5z" fill="#0d0e12"/>
<!-- node tool -->
<path d="M4 70.4L5.4 64.8" stroke="#2a36c8" stroke-width="1" fill="none"/>
<rect x="3" y="69.4" width="1.9" height="1.9" fill="#5560dc"/><rect x="4.3" y="63.6" width="2.2" height="2.2" fill="#2a36c8"/>
<rect x="9.2" y="63" width="1.8" height="1.8" fill="#8a8fa8"/>
<path d="M6.4 65.6l4.2 3l-1.9 0.2l1 1.9l-0.9 0.5l-1-1.9l-1.2 1.3z" fill="#30333c" stroke="#e8e8ec" stroke-width="0.7" stroke-linejoin="round"/>
<!-- tweak -->
<circle cx="6.2" cy="80.4" r="2.3" fill="none" stroke="#14161a" stroke-width="1.1"/><circle cx="8.4" cy="82.8" r="2.3" fill="none" stroke="#14161a" stroke-width="1.1"/>
<rect x="1.5" y="88.6" width="13" height="0.5" fill="#3c3f49"/>
<!-- rect -->
<rect x="4.5" y="95.1" width="5.7" height="5.6" fill="#c9cacf" stroke="#f4f4f6" stroke-width="0.9"/>
<!-- circle -->
<circle cx="7.1" cy="112.2" r="3" fill="#f3bfcb" stroke="#f7e9ec" stroke-width="0.8"/>
<!-- star -->
<path d="M4.6 123.4l2 0.5l1.4-1.2l0.5 1.9l2 0.6l-1 1.5l1.3 1.8l-2.1 0.2l-0.7 1.8l-1.7-1.2l-2 0.2l0.5-1.8l-1.5-1.4l1.8-0.9z" fill="#e9e36e" stroke="#e9e36e" stroke-width="0.6" stroke-linejoin="round"/>
<!-- 3d box -->
<path d="M7.1 137.6l3.2 1.7v3.6l-3.2 1.8l-3.2-1.8v-3.6z" fill="#6f6ad0" stroke="#e9e9f4" stroke-width="0.8"/><path d="M7.1 137.9l2.8 1.5l-2.8 1.5l-2.8-1.5z" fill="#d8d8f0"/><path d="M4.2 139.6l2.9 1.5v3.2l-2.9-1.6z" fill="#a9a6e4"/>
<!-- spiral -->
<path d="M7.8 156.4a1 1 0 1 1 1-1.2a2.2 2.2 0 1 1 -4.3 0.2a3.4 3.4 0 1 1 6.8 0.4v3.4" fill="none" stroke="#181a20" stroke-width="1.1"/>
<rect x="1.5" y="164.2" width="13" height="0.5" fill="#3c3f49"/>
<!-- pencil -->
<path d="M4.2 175.4L8.6 171" stroke="#15171b" stroke-width="0.9"/><path d="M7.8 172.4l1.7-3.8l1.6 1.4l-1.9 3.6z" fill="#c8e6f8"/><path d="M8.3 172.3l1.2 1" stroke="#d0453c" stroke-width="0.8"/>
<!-- pen -->
<path d="M6.2 189.2l1-4.2l2.2-2.6l1.6 1.4l-1.8 2.9z" fill="#111216"/><path d="M7.2 188l0.8-2.8l1.6-2l1.1 0.9l-1.4 2.3z" fill="#f3d63e"/>
<!-- calligraphy -->
<path d="M4.6 203.6c-0.4-2.2 1.2-4.8 3.6-5.6l2.2 1.4c0.4 2-1.4 4.4-3.8 5z" fill="#0e0f13"/><path d="M7.4 201.6l0.8-2.6l1.2-1l0.7 0.6l-0.7 1.9z" fill="#f0d9a6"/><path d="M7.4 201.8l1.8-1.2" stroke="#e98d2d" stroke-width="0.8"/>
<!-- text -->
<path d="M4.2 219.2l2.2-6.4h0.9l1.6 6.4h-1.2l-0.4-1.7h-1.8l-0.5 1.7z" fill="#0e0f13"/>
<path d="M8.8 212.7h2.2M8.8 219.4h2.2M9.9 212.7v6.7" stroke="#eef0f3" stroke-width="0.9" fill="none"/>
<rect x="1.5" y="224" width="13" height="0.5" fill="#3c3f49"/>
<!-- gradient -->
<rect x="3.9" y="228.6" width="6.9" height="6.9" fill="#9ed4a0"/><path d="M3.9 228.6h6.9l-6.9 6.9z" fill="#c8ecc6"/><path d="M4.6 230.4L10 234.6" stroke="#3d8a4c" stroke-width="0.8"/>
<!-- mesh -->
<path d="M3.9 243.2l2.4 0.9l0.9 0.1l0.9-0.1l2.4-0.9l-0.9 2.4l-0.1 0.8l0.1 0.9l0.9 2.4l-2.4-0.9l-0.9-0.1l-0.9 0.1l-2.4 0.9l0.9-2.4l0.1-0.9l-0.1-0.8z" fill="#6ec2ac"/>
<!-- dropper -->
<path d="M4.4 264.2L8.4 259.8" stroke="#0f1014" stroke-width="1"/><path d="M7.6 260.6l2.4-3.2l1 0.9l-2.5 3z" fill="#0f1014"/><path d="M5 263.4l2.6-2.8" stroke="#8e929c" stroke-width="0.5"/>
<!-- bucket -->
<path d="M5 273.6l3.2-2.6l2.6 2.2l-1 3.6h-3.6z" fill="#cfe6f7"/><path d="M5.6 272.8l2.6-1.9l2.2 1.7z" fill="#f4f9fd"/><path d="M5 277.8h4.6v1.4h-4.6z" fill="#3d9a52"/><path d="M4.4 274.4l-0.6 2.6" stroke="#8ec6ee" stroke-width="0.8"/>
<rect x="1.5" y="283" width="13" height="0.5" fill="#3c3f49"/>
<!-- tray / tweak -->
<path d="M3.5 292.2l3.8-2.6l3.6 2.6v3.8h-7.4z" fill="#e6e7ea"/><path d="M4.4 292.6h5.6" stroke="#2f323b" stroke-width="0.7"/><path d="M7.4 289.6c0.4-1.6 2-1.8 2.8-0.8" stroke="#15171b" stroke-width="0.7" fill="none"/>
<!-- spray -->
<path d="M5.6 304.6l1.8-0.6l1.4 5.6l-2 0.6z" fill="#0f1014"/><path d="M7.8 305.4l1.6-0.6l1.6 4.6l-1.8 0.9z" fill="#8dc63f"/><path d="M8.2 304l0.8-0.4l0.4 0.9" stroke="#c2e088" stroke-width="0.7" fill="none"/>
<!-- eraser -->
<path d="M6.2 320.4l2.2-3l2.6 1.6l-2.2 3.2z" fill="#f0b4a8"/><path d="M4.6 322.6l1.6-2.2l2.6 1.8l-1.2 1.7h-2z" fill="#2a3cc4"/><path d="M3.6 324.3h7.6" stroke="#5a1a20" stroke-width="0.6"/>
<!-- connector -->
<path d="M6.6 333L4.4 338M6.6 333L9.6 338M4.4 338H9.6" stroke="#0f1014" stroke-width="0.8" fill="none"/>
<rect x="5.6" y="331.6" width="2.1" height="2.1" fill="#f2f3f5"/><rect x="3.3" y="337" width="2.1" height="2.1" fill="#f2f3f5"/><rect x="8.5" y="337" width="2.1" height="2.1" fill="#f2f3f5"/>
<!-- measure -->
<path d="M4.4 352.2L10.2 346" stroke="#15171b" stroke-width="0.9"/><path d="M8 349.6l1.6-2.4" stroke="#7c9a2e" stroke-width="1.1"/><circle cx="5.4" cy="351.2" r="0.7" fill="#5c606c"/>
<rect x="1.5" y="357.4" width="13" height="0.5" fill="#3c3f49"/>
<!-- pink ruler -->
<path d="M4.2 364l2.2-1.6l3.4 5l-2.2 1.6z" fill="#e6b5ab"/><path d="M7.6 369l2.2-1.6l0.5 0.8l-2.2 1.6z" fill="#f7f2f0"/>
<!-- zoom -->
<circle cx="6" cy="379.8" r="2.2" fill="#f0f1f3" stroke="#fafafa" stroke-width="0.6"/><circle cx="6" cy="379.8" r="1.3" fill="#d4d6da"/><path d="M8 381.8l2.4 2.2" stroke="#f0a030" stroke-width="1.4"/>
<!-- pages -->
<path d="M5.6 392.6h3.4l1.5 1.4v4.4h-4.9z" fill="#f3f4f6"/><path d="M4 394h3.2v4.6h-3.2z" fill="#f3f4f6" stroke="#2f323b" stroke-width="0.5"/><rect x="5" y="395.6" width="1.4" height="2.2" fill="#5c606a"/><rect x="8" y="394.6" width="1.4" height="2.6" fill="#5c606a"/>

<!-- RIGHT COMMAND BAR -->
<rect x="575" y="45.5" width="4.8" height="420" fill="#24272e"/>
<!-- new -->
<path d="M589.8 50h4l2 2v5.4h-6z" fill="#f1f2f4"/><rect x="591" y="51.4" width="1.2" height="4.4" fill="#b9bbc2"/><circle cx="596" cy="55.6" r="1.7" fill="#9ac43c"/><path d="M595 55.6h2M596 54.6v2" stroke="#f4f8e8" stroke-width="0.6"/>
<!-- open -->
<path d="M589.8 66.6h3l0.8 1h3.4v2h-7.2z" fill="#f7d2bc"/><path d="M589.8 68.4h7.8v3.8h-7.8z" fill="#f0702c"/>
<!-- save -->
<path d="M590 82.4l1-2.2h5.2l1.2 2.2v4.6h-7.4z" fill="#e3e5e8"/><path d="M592.6 80.4h2.2v2.4h1.3l-2.4 2.4l-2.4-2.4h1.3z" fill="#6bb83c"/><path d="M590.6 85.2h6.2" stroke="#9a9da6" stroke-width="0.7"/>
<!-- print -->
<path d="M591.6 98v-2.4h4.4v2.4" fill="none" stroke="#eef0f2" stroke-width="0.9"/><rect x="589.9" y="98" width="7.8" height="4" rx="1" fill="none" stroke="#eef0f2" stroke-width="1"/><rect x="593" y="96.6" width="1.4" height="1.4" fill="#eef0f2"/>
<rect x="586.5" y="106.6" width="12" height="0.5" fill="#3c3f49"/>
<!-- import -->
<path d="M590.3 112.3h4.6l2 2v5.4h-6.6z" fill="#f1f2f4"/><circle cx="593.4" cy="116.4" r="2" fill="#4f97e0"/><path d="M592.2 116.4h2.4" stroke="#dcecfb" stroke-width="0.7"/>
<!-- export -->
<path d="M590.1 127.6h4.6l2 2v5.2h-6.6z" fill="#f1f2f4"/><path d="M592 131.6h5.4v2.2h-5.4z" fill="#cf4fc4"/><path d="M592.4 129.6h2.6" stroke="#b7b9c0" stroke-width="0.6"/>
<rect x="586.5" y="139.2" width="12" height="0.5" fill="#3c3f49"/>
<!-- undo -->
<path d="M589.4 148.4l3.4-2.8v1.7c2.8 0 4.8 1.4 5.2 4.2c-1.2-1.6-2.8-2-5.2-2v1.7z" fill="#f0862e"/>
<!-- redo dim -->
<path d="M597.6 163.8l-3.4-2.8v1.7c-2.6 0-4.2 1.4-4.4 4.2c1-1.6 2.2-2 4.4-2v1.7z" fill="#4a5a46"/>
<rect x="586.5" y="171.4" width="12" height="0.5" fill="#3c3f49"/>
<!-- copy -->
<path d="M589.8 176.5h4.2v5.4h-4.2z" fill="#e9ebee"/><path d="M592.6 178.8h3.6l1.4 1.4v4.4h-5z" fill="#f4f5f7" stroke="#2f323b" stroke-width="0.4"/><rect x="593.6" y="180.6" width="2.6" height="2.8" fill="#c5c7cd"/>
<!-- cut -->
<path d="M590.6 192l5 6M596.4 192l-5 6" stroke="#f1f2f4" stroke-width="1" fill="none"/><path d="M592.2 196.4l-1.4 3.4M594.8 196.4l1.5 3.4" stroke="#cf3046" stroke-width="1.6" fill="none"/>
<!-- paste -->
<rect x="590" y="208.2" width="6" height="7.6" fill="#d7ad68"/><rect x="591.8" y="207.4" width="2.4" height="1.4" fill="#8a8d96"/><path d="M592.2 209.8h5.4v6.2h-5.4z" fill="#eef0f2"/><rect x="593.4" y="211.2" width="3" height="3.6" fill="#c9cbd0"/>
<rect x="586.5" y="219" width="12" height="0.5" fill="#3c3f49"/>
<!-- zoom sel -->
<circle cx="593.3" cy="227.1" r="3.1" fill="#e6e7ea" stroke="#f6f6f8" stroke-width="0.6"/><rect x="591.2" y="226.5" width="4.2" height="1.2" fill="#a6a9b0"/>
<!-- zoom drawing -->
<circle cx="593.3" cy="242.2" r="3" fill="#5d6068" stroke="#f1f2f4" stroke-width="1"/><path d="M591.8 241.6l2-1.2l1.4 1.8l-1.6 1.8z" fill="#c4d64a"/><path d="M594.6 243.6l1.4 1.4" stroke="#4e7d2c" stroke-width="0.9"/>
<!-- zoom page -->
<circle cx="593.3" cy="257.1" r="3" fill="#8d9099" stroke="#f1f2f4" stroke-width="1"/><rect x="592.7" y="254.9" width="1.3" height="4.4" fill="#f6f6f8"/>
<!-- handle -->
<g fill="#a9acb4"><rect x="577.3" y="252" width="1.4" height="1.3"/><rect x="577.3" y="254.2" width="1.4" height="1.3"/><rect x="577.3" y="256.4" width="1.4" height="1.3"/></g>
<!-- page white -->
<rect x="591.4" y="269.5" width="4.8" height="6.8" fill="#f4f5f7" stroke="#121317" stroke-width="0.9"/><rect x="593.2" y="271.4" width="1" height="3" fill="#c9cbd0"/>
<rect x="586.5" y="281.2" width="12" height="0.5" fill="#3c3f49"/>
<!-- dropdown -->
<rect x="586" y="283.8" width="15" height="11.8" fill="#2a2d35" stroke="#3b3e48" stroke-width="0.6"/>
<path d="M590.9 288.4L596.5 288.4L593.7 291.6z" fill="#ffffff"/>

</svg>
<div id="tbt" class="abs">
<span class="lbl" style="left:136.2px">X:</span><span class="val" style="left:147.5px">1.182</span>
<span class="lbl" style="left:209.5px">Y:</span><span class="val" style="left:220px">37.157</span>
<span class="lbl" style="left:281.9px">W:</span><span class="val" style="left:296.2px">197.300</span>
<span class="lbl" style="left:376.2px">H:</span><span class="val" style="left:388.7px">97.493</span>
<span class="lbl" style="left:455.8px;top:5.4px;font-size:8.1px;color:#d0d3d9">px</span>
</div>
</body>
</html>
